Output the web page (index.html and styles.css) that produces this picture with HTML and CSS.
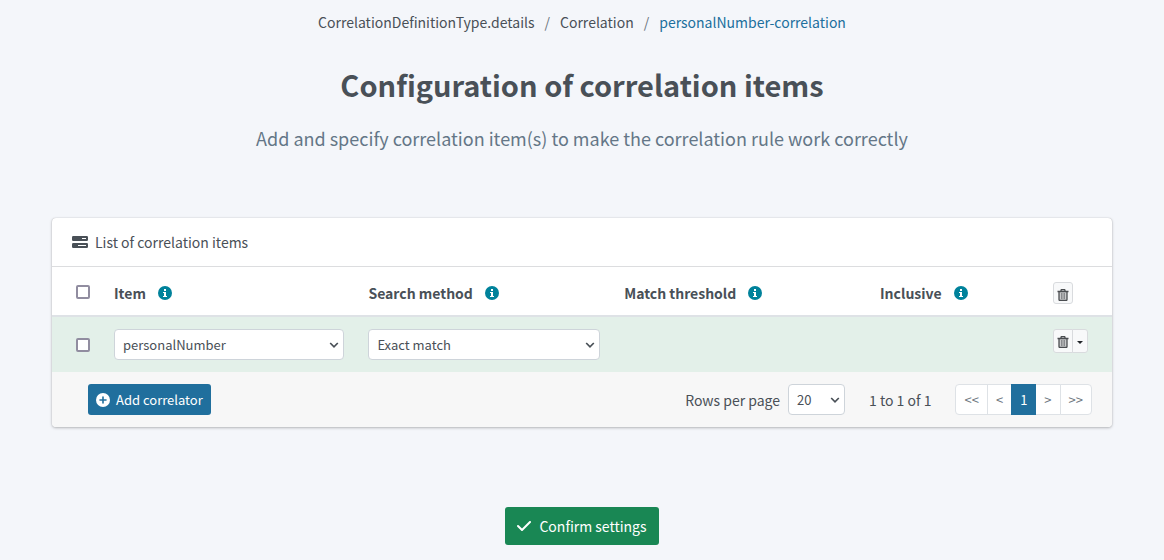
FILE: index.html
```html
<!DOCTYPE html>
<html lang="en">
<head>
<meta charset="utf-8">
<meta name="viewport" content="width=device-width, initial-scale=1">
<title>Configuration of correlation items</title>
<link rel="stylesheet" href="styles.css">
</head>
<body>
<svg class="sprite" aria-hidden="true">
  <symbol id="info" viewBox="0 0 14 14">
    <circle cx="7" cy="7" r="7" fill="#00829b"/>
    <path d="M6 3h2v2H6zM5 6h3v4h1v1H5v-1h1V7H5z" fill="#fff"/>
  </symbol>
  <symbol id="trash" viewBox="0 0 12 12">
    <path d="M2 3h8v8.500H2z" fill="#c9cacb"/>
    <path d="M.5 2.500h11M4 2.500V1.500q0-1 1-1h2q1 0 1 1v1M2 3v7.500q0 1 1 1h6q1 0 1-1V3" fill="none" stroke="#4a4d50" stroke-width="1.300"/>
    <path d="M4.500 4v6M6 4v6M7.500 4v6" stroke="#77797c" stroke-width=".8"/>
  </symbol>
</svg>
<main class="page">
  <nav class="breadcrumb" aria-label="Breadcrumb">
    <a href="#">CorrelationDefinitionType.details</a>
    <span class="slash">/</span>
    <a href="#">Correlation</a>
    <span class="slash">/</span>
    <a class="current" href="#">personalNumber-correlation</a>
  </nav>
  <h1 class="title">Configuration of correlation items</h1>
  <p class="subtitle">Add and specify correlation item(s) to make the correlation rule work correctly</p>

  <section class="card">
    <header class="card-header">
      <svg width="16" height="12" viewBox="0 0 16 12" aria-hidden="true">
        <rect width="16" height="5" rx="1.200" fill="#495057"/>
        <rect y="7" width="16" height="5" rx="1.200" fill="#495057"/>
        <path d="M10 2.500h4M6 9.500h8" stroke="#fff"/>
      </svg>
      <h2 class="card-title">List of correlation items</h2>
    </header>
    <table class="items">
      <colgroup><col class="col-check"><col class="col-item"><col><col><col class="col-inclusive"><col class="col-actions"></colgroup>
      <thead>
        <tr>
          <th class="check-cell"><input class="check" type="checkbox" aria-label="Select all"></th>
          <th><span class="label">Item <svg class="info"><use href="#info"/></svg></span></th>
          <th><span class="label">Search method <svg class="info"><use href="#info"/></svg></span></th>
          <th><span class="label">Match threshold <svg class="info"><use href="#info"/></svg></span></th>
          <th><span class="label">Inclusive <svg class="info"><use href="#info"/></svg></span></th>
          <th><span class="actions"><button class="action" type="button" aria-label="Delete selected"><svg class="trash"><use href="#trash"/></svg></button></span></th>
        </tr>
      </thead>
      <tbody>
        <tr>
          <td class="check-cell"><input class="check" type="checkbox" aria-label="Select row"></td>
          <td><select class="select" aria-label="Item"><option>personalNumber</option></select></td>
          <td><select class="select" aria-label="Search method"><option>Exact match</option></select></td>
          <td></td>
          <td></td>
          <td class="top"><span class="actions"><button class="action" type="button" aria-label="Delete"><svg class="trash"><use href="#trash"/></svg></button><button class="action more" type="button" aria-label="More actions"><svg width="6" height="3" viewBox="0 0 6 3"><path d="M0 0h6L3 3z" fill="#212529"/></svg></button></span></td>
        </tr>
      </tbody>
    </table>
    <footer class="card-footer">
      <button class="add" type="button">
        <svg width="14" height="14" viewBox="0 0 14 14" aria-hidden="true"><circle cx="7" cy="7" r="7" fill="#fff"/><path d="M7 4v6M4 7h6" stroke="#206f9d" stroke-width="1.600" stroke-linecap="round"/></svg>
        Add correlator
      </button>
      <div class="paging">
        <label class="rows" for="rows">Rows per page</label>
        <select class="select rows-select" id="rows"><option>20</option></select>
        <span class="count">1 to 1 of 1</span>
        <nav class="pages" aria-label="Pages">
          <a class="page-link" href="#">&lt;&lt;</a>
          <a class="page-link" href="#">&lt;</a>
          <a class="page-link active" href="#">1</a>
          <a class="page-link" href="#">&gt;</a>
          <a class="page-link" href="#">&gt;&gt;</a>
        </nav>
      </div>
    </footer>
  </section>

  <button class="confirm" type="button">
    <svg width="14" height="10" viewBox="0 0 14 10" aria-hidden="true"><path d="M1 5l4 4 8-8" fill="none" stroke="#fff" stroke-width="2" stroke-linecap="round" stroke-linejoin="round"/></svg>
    Confirm settings
  </button>
</main>
</body>
</html>
```

FILE: styles.css
```css
*, *::before, *::after { box-sizing: border-box; }
body {
  margin: 0;
  background: #f4f6fa;
  color: #495057;
  font: 14px/24px "Noto Sans CJK SC", "Noto Sans", sans-serif;
}
a { color: inherit; text-decoration: none; }
button, select { font: inherit; color: inherit; margin: 0; }
svg { display: block; flex: none; }
.sprite { position: absolute; width: 0; height: 0; }
.page {
  display: flex;
  flex-direction: column;
  align-items: center;
  padding: 10px 52px 15px;
}
.breadcrumb { display: flex; gap: 10px; }
.slash { color: #6c757d; }
.current { color: #206f9d; }
.title { margin: 30px 0 0; font-size: 29px; line-height: 40px; font-weight: 700; }
.subtitle { margin: 19px 0 0; font-size: 18px; line-height: 30px; color: #647687; }

.card {
  width: 100%;
  margin-top: 65px;
  background: #fff;
  border-radius: 4px;
  box-shadow: 0 0 1px rgba(0, 0, 0, .25), 0 1px 3px rgba(0, 0, 0, .25);
  overflow: hidden;
}
.card-header {
  display: flex;
  align-items: center;
  gap: 7px;
  padding: 12px 20px;
  border-bottom: 1px solid #dcdddf;
}
.card-title { margin: 0; font-size: 14px; font-weight: 400; }
.items { width: 100%; table-layout: fixed; border-collapse: separate; border-spacing: 0; }
.col-check { width: 50px; }
.col-item { width: 24%; }
.col-inclusive { width: 173px; }
.col-actions { width: 71px; }
.items th, .items td { padding: 12px; text-align: left; vertical-align: middle; }
.items th { height: 50px; padding: 14px 12px 11px; border-bottom: 2px solid #dee2e6; }
.items tbody tr { background: #e3f0e9; }
.items .check-cell { padding: 0 0 0 24px; }
.items th.check-cell { padding-top: 2px; }
.items .top { vertical-align: top; }
.label { display: flex; align-items: center; gap: 12px; white-space: nowrap; line-height: 22px; }
.info { width: 14px; height: 14px; }
.check {
  display: block;
  appearance: none;
  width: 14px;
  height: 14px;
  margin: 0;
  border: 2px solid #918da0;
  border-radius: 2px;
  background: #fff;
}
.actions { display: flex; }
.action {
  display: flex;
  align-items: center;
  justify-content: center;
  width: 20px;
  height: 24px;
  padding: 2px 0 0;
  background: #f8f9fa;
  border: 1px solid #d9dbde;
  border-radius: 3px;
}
.items th .action { height: 22px; padding-top: 4px; }
.action:not(:last-child) { border-radius: 3px 0 0 3px; }
.more { width: 16px; margin-left: -1px; border-radius: 0 3px 3px 0; }
.trash { width: 12px; height: 12px; }
.select {
  display: block;
  appearance: none;
  width: 100%;
  height: 31px;
  padding: 4px 20px 4px 8px;
  font-size: 13px;
  line-height: 20px;
  background: #fff url("data:image/svg+xml,%3Csvg xmlns='http://www.w3.org/2000/svg' width='10' height='6' viewBox='0 0 10 6'%3E%3Cpath d='M1.200 1L5 4.800 8.800 1' fill='none' stroke='%23495057' stroke-width='1.700'/%3E%3C/svg%3E") no-repeat right 4px center;
  border: 1px solid #ced4da;
  border-radius: 4px;
}
.card-footer {
  display: flex;
  align-items: center;
  justify-content: space-between;
  padding: 12px 20px 12px 36px;
  background: #f7f7f7;
}
.add, .confirm {
  display: flex;
  align-items: center;
  gap: 6px;
  border: 0;
  border-radius: 3px;
  color: #fff;
}
.add { height: 31px; padding: 0 8px; font-size: 13px; background: #206f9d; }
.paging { display: flex; align-items: center; }
.rows-select { width: 57px; margin: 0 24px 0 8px; }
.pages { display: flex; margin-left: 24px; }
.page-link {
  height: 31px;
  padding: 4px 8px;
  font-size: 13px;
  line-height: 22px;
  color: #6c757d;
  background: #fff;
  border: 1px solid #dee2e6;
}
.page-link + .page-link { margin-left: -1px; }
.page-link:first-child { border-radius: 4px 0 0 4px; }
.page-link:last-child { border-radius: 0 4px 4px 0; }
.page-link.active { color: #fff; background: #206f9d; border-color: #206f9d; z-index: 1; }
.confirm { height: 38px; margin-top: 80px; padding: 0 12px; gap: 8px; background: #198754; }
```
